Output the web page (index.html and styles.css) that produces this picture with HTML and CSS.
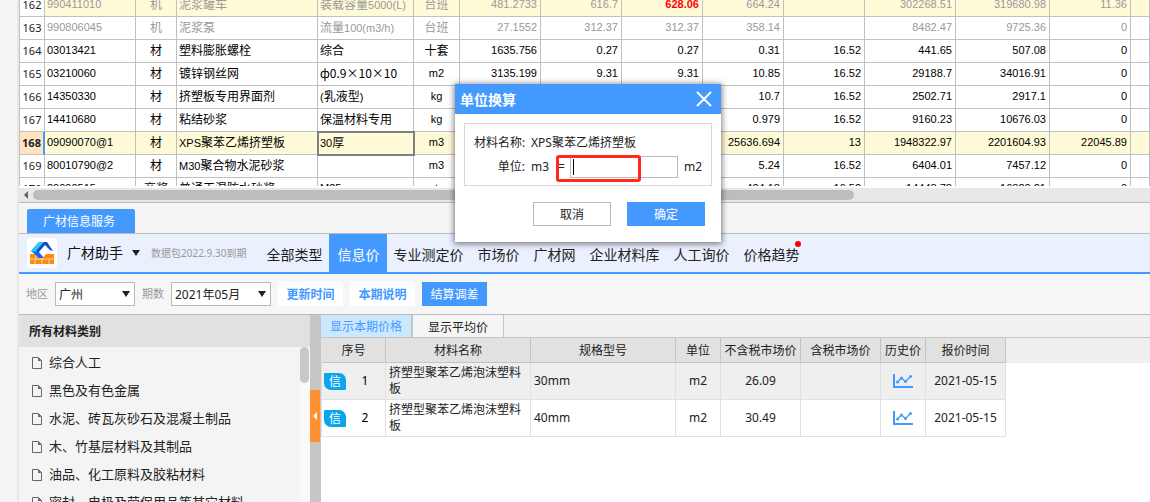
FILE: index.html
```html
<!DOCTYPE html>
<html lang="zh-CN">
<head>
<meta charset="utf-8">
<meta name="viewport" content="width=device-width, initial-scale=1">
<title>广材信息服务</title>
<link rel="stylesheet" href="styles.css">
</head>
<body>
<svg class="sprite" aria-hidden="true">
  <symbol id="i-file" viewBox="0 0 10 12"><path d="M.5.5h6l3 3v8h-9z" fill="none" stroke="#666"/><path d="M6 .5v3.5h3.5z" fill="#666"/></symbol>
  <symbol id="i-down" viewBox="0 0 8 6"><path d="M0 0h8L4 6z" fill="currentColor"/></symbol>
  <symbol id="i-chart" viewBox="0 0 20 14"><path d="M1 0v13h19" fill="none" stroke="#49f" stroke-width="2"/><path d="M4.500 8L8.500 4l4 3.500L17.500 2.500" fill="none" stroke="#49f" stroke-width="1.300"/><g fill="#49f"><circle cx="4.500" cy="8" r="1.500"/><circle cx="8.500" cy="4" r="1.500"/><circle cx="12.500" cy="7.500" r="1.500"/><circle cx="17.500" cy="2.500" r="1.500"/></g></symbol>
</svg>
<main class="app">
  <section class="sheet">
    <table class="grid">
      <colgroup><col class="w-no"><col class="w-code"><col class="w-kind"><col class="w-name"><col class="w-spec"><col class="w-unit"><col class="w-num"><col class="w-num"><col class="w-num"><col class="w-num"><col class="w-num"><col class="w-sum"><col class="w-total"><col class="w-num"><col></colgroup>
      <tbody>
      <tr class="dim warm"><th>162</th><td class="n">990411010</td><td class="c">机</td><td>泥浆罐车</td><td>装载容量<span class="n">5000(L)</span></td><td class="c">台班</td><td class="n r">481.2733</td><td class="n r">616.7</td><td class="n r alert">628.06</td><td class="n r">664.24</td><td></td><td class="n r">302268.51</td><td class="n r">319680.98</td><td class="n r">11.36</td><td></td></tr>
      <tr class="dim"><th>163</th><td class="n">990806045</td><td class="c">机</td><td>泥浆泵</td><td>流量<span class="n">100(m3/h)</span></td><td class="c">台班</td><td class="n r">27.1552</td><td class="n r">312.37</td><td class="n r">312.37</td><td class="n r">358.14</td><td></td><td class="n r">8482.47</td><td class="n r">9725.36</td><td class="n r">0</td><td></td></tr>
      <tr><th>164</th><td class="n">03013421</td><td class="c">材</td><td>塑料膨胀螺栓</td><td>综合</td><td class="c">十套</td><td class="n r">1635.756</td><td class="n r">0.27</td><td class="n r">0.27</td><td class="n r">0.31</td><td class="n r">16.52</td><td class="n r">441.65</td><td class="n r">507.08</td><td class="n r">0</td><td></td></tr>
      <tr><th>165</th><td class="n">03210060</td><td class="c">材</td><td>镀锌钢丝网</td><td>ф0.9×10×10</td><td class="c n">m2</td><td class="n r">3135.199</td><td class="n r">9.31</td><td class="n r">9.31</td><td class="n r">10.85</td><td class="n r">16.52</td><td class="n r">29188.7</td><td class="n r">34016.91</td><td class="n r">0</td><td></td></tr>
      <tr><th>166</th><td class="n">14350330</td><td class="c">材</td><td>挤塑板专用界面剂</td><td><span class="n">(</span>乳液型<span class="n">)</span></td><td class="c n">kg</td><td></td><td></td><td></td><td class="n r">10.7</td><td class="n r">16.52</td><td class="n r">2502.71</td><td class="n r">2917.1</td><td class="n r">0</td><td></td></tr>
      <tr><th>167</th><td class="n">14410680</td><td class="c">材</td><td>粘结砂浆</td><td>保温材料专用</td><td class="c n">kg</td><td></td><td></td><td></td><td class="n r">0.979</td><td class="n r">16.52</td><td class="n r">9160.23</td><td class="n r">10676.03</td><td class="n r">0</td><td></td></tr>
      <tr class="warm current"><th>168</th><td class="n">09090070@1</td><td class="c">材</td><td><span class="n">XPS</span>聚苯乙烯挤塑板</td><td class="picked"><span class="n">30</span>厚</td><td class="c n">m3</td><td></td><td></td><td></td><td class="n r">25636.694</td><td class="n r">13</td><td class="n r">1948322.97</td><td class="n r">2201604.93</td><td class="n r">22045.89</td><td></td></tr>
      <tr><th>169</th><td class="n">80010790@2</td><td class="c">材</td><td><span class="n">M30</span>聚合物水泥砂浆</td><td></td><td class="c n">m3</td><td></td><td></td><td></td><td class="n r">5.24</td><td class="n r">16.52</td><td class="n r">6404.01</td><td class="n r">7457.12</td><td class="n r">0</td><td></td></tr>
      <tr><th>170</th><td class="n">80090515</td><td class="c">商浆</td><td>普通干混防水砂浆</td><td class="n">M25</td><td class="c n">t</td><td></td><td></td><td></td><td class="n r">424.18</td><td class="n r">16.52</td><td class="n r">14448.78</td><td class="n r">16820.21</td><td class="n r">0</td><td></td></tr>
      </tbody>
    </table>
  </section>
  <div class="hscroll">
    <svg class="hscroll-arrow" viewBox="0 0 4 8"><path d="M4 0v8L0 4z" fill="#666"/></svg>
    <div class="hscroll-track"><div class="hscroll-thumb"></div></div>
  </div>
  <div class="panel-tabs"><button class="panel-tab">广材信息服务</button></div>
  <nav class="nav">
    <svg class="logo" viewBox="0 0 30 30"><rect width="30" height="30" rx="4" fill="#fff"/><path d="M3 16h24v10H3z" fill="#ff8a10"/><path d="M3 21h24M9 21v-5M8 21v5M15 21v5M22 21v5" stroke="#fff" stroke-width=".6"/><path d="M8 15h12l-5 6z" fill="#fff"/><path d="M12 4h6l-7 9 6 7h-5L4 13z" fill="#1468f0"/><path d="M12 4h5L8 14l-4-1z" fill="#2bc8fb"/><path d="M17 4h3l6 9-3-1-5-5-7 8-1-3z" fill="#0a50c8"/><path d="M18 17h6l-3 4z" fill="#ff8a10"/></svg>
    <button class="brand">广材助手 <svg class="caret"><use href="#i-down"/></svg></button>
    <span class="expiry">数据包2022.9.30到期</span>
    <a class="nav-item" href="#">全部类型</a>
    <a class="nav-item active" href="#">信息价</a>
    <a class="nav-item" href="#">专业测定价</a>
    <a class="nav-item" href="#">市场价</a>
    <a class="nav-item" href="#">广材网</a>
    <a class="nav-item" href="#">企业材料库</a>
    <a class="nav-item" href="#">人工询价</a>
    <a class="nav-item dotted" href="#">价格趋势</a>
  </nav>
  <form class="filters">
    <label for="area">地区</label>
    <span class="pick pick-area"><select id="area"><option>广州</option></select><svg class="caret"><use href="#i-down"/></svg></span>
    <label for="period">期数</label>
    <span class="pick pick-period"><select id="period"><option>2021年05月</option></select><svg class="caret"><use href="#i-down"/></svg></span>
    <button type="button" class="chip">更新时间</button>
    <button type="button" class="chip">本期说明</button>
    <button type="button" class="chip solid">结算调差</button>
  </form>
  <div class="work">
    <aside class="side">
      <h2 class="side-title">所有材料类别</h2>
      <div class="side-body">
        <ul class="tree">
          <li><svg><use href="#i-file"/></svg>综合人工</li>
          <li><svg><use href="#i-file"/></svg>黑色及有色金属</li>
          <li><svg><use href="#i-file"/></svg>水泥、砖瓦灰砂石及混凝土制品</li>
          <li><svg><use href="#i-file"/></svg>木、竹基层材料及其制品</li>
          <li><svg><use href="#i-file"/></svg>油品、化工原料及胶粘材料</li>
          <li><svg><use href="#i-file"/></svg>密封、电极及劳保用品等其它材料</li>
        </ul>
        <div class="vscroll"><div class="vscroll-thumb"></div></div>
      </div>
    </aside>
    <div class="splitter"><button class="fold" aria-label="收起"><svg viewBox="0 0 4 8"><path d="M4 0v8L0 4z" fill="#fff"/></svg></button></div>
    <section class="result">
      <div class="modes"><button class="mode on">显示本期价格</button><button class="mode">显示平均价</button></div>
      <div class="prices-wrap">
      <table class="prices">
        <colgroup><col class="p-no"><col class="p-name"><col class="p-name"><col class="p-small"><col class="p-mid"><col class="p-mid"><col class="p-small"><col class="p-mid"></colgroup>
        <thead><tr><th>序号</th><th>材料名称</th><th>规格型号</th><th>单位</th><th>不含税市场价</th><th>含税市场价</th><th>历史价</th><th>报价时间</th></tr></thead>
        <tbody>
        <tr><td><div class="seq"><span class="badge">信</span><span class="idx">1</span></div></td><td class="left">挤塑型聚苯乙烯泡沫塑料板</td><td class="left">30mm</td><td>m2</td><td>26.09</td><td></td><td><svg class="chart"><use href="#i-chart"/></svg></td><td>2021-05-15</td></tr>
        <tr><td><div class="seq"><span class="badge">信</span><span class="idx">2</span></div></td><td class="left">挤塑型聚苯乙烯泡沫塑料板</td><td class="left">40mm</td><td>m2</td><td>30.49</td><td></td><td><svg class="chart"><use href="#i-chart"/></svg></td><td>2021-05-15</td></tr>
        </tbody>
      </table>
      </div>
    </section>
  </div>
</main>
<div class="dialog" role="dialog" aria-labelledby="dlg-title">
  <header class="dialog-head"><h1 id="dlg-title">单位换算</h1><button class="close" aria-label="关闭"><svg viewBox="0 0 16 16"><path d="M1 1l14 14M15 1L1 15" stroke="#fff" stroke-width="2"/></svg></button></header>
  <div class="dialog-box">
    <span class="key">材料名称:</span><span>XPS聚苯乙烯挤塑板</span>
    <label class="key" for="ratio">单位:</label>
    <div class="convert"><span>m3</span><span class="eq">=</span><span class="field"><input id="ratio" type="text"><i class="cursor"></i><i class="mark"></i></span><span>m2</span></div>
  </div>
  <footer class="dialog-foot"><button class="btn">取消</button><button class="btn primary">确定</button></footer>
</div>
</body>
</html>
```
FILE: styles.css
```css
* { box-sizing: border-box; }
body {
  margin: 0;
  height: 100vh;
  overflow: hidden;
  background: #f4f4f4;
  color: #222;
  font: 12px/16px "Noto Sans", "Noto Sans CJK SC", sans-serif;
}
button, input, select { font: inherit; color: inherit; margin: 0; padding: 0; border: 0; border-radius: 0; background: none; }
h1, h2, ul { margin: 0; padding: 0; }
a { color: inherit; text-decoration: none; }
.sprite { display: none; }
.app {
  height: 100%;
  margin-left: 17px;
  border-left: 2px solid #e8e8e8;
  display: flex;
  flex-direction: column;
}

/* estimate sheet */
.sheet { height: 188px; overflow: hidden; background: #fff; border-bottom: 2px solid #fff; flex: none; }
.grid {
  width: 100%;
  margin-top: -6px;
  table-layout: fixed;
  border-spacing: 0;
  border-left: 1px solid #c0c0c0;
  color: #000;
}
.grid td, .grid th {
  height: 23px;
  padding: 0 2px;
  line-height: 18px;
  border-right: 1px solid #c0c0c0;
  border-bottom: 1px solid #c0c0c0;
  white-space: nowrap;
}
.grid td { padding-bottom: 2px; font-family: "Noto Sans CJK SC", sans-serif; }
.grid th { padding: 0; font: 11px/18px "Noto Sans", sans-serif; color: #222; }
.grid .n { font-family: "Liberation Sans", sans-serif; font-size: 11px; }
.grid .c { text-align: center; }
.grid .r { text-align: right; padding-right: 3px; }
.grid .dim td { color: #999; }
.grid .warm td { background: #fffbd9; }
.grid .dim .alert { color: #f00; font-weight: bold; }
.grid .current th { background: #ffe4c4; font-weight: bold; border-right: 2px solid #49f; }
.grid .picked { outline: 2px solid #808080; outline-offset: -1px; }
.w-no { width: 25px; }
.w-code { width: 91px; }
.w-kind { width: 41px; }
.w-name { width: 141px; }
.w-spec { width: 96px; }
.w-unit { width: 46px; }
.w-num { width: 81px; }
.w-sum { width: 91px; }
.w-total { width: 94px; }

.hscroll { flex: none; height: 15px; display: flex; align-items: center; gap: 5px; padding-left: 5px; background: #e8e8e8; border-bottom: 1px solid #bbb; }
.hscroll-arrow { width: 4px; height: 8px; }
.hscroll-track { flex: 1; }
.hscroll-thumb { width: 73.5%; height: 10px; border-radius: 5px; background: #bdbdbd; }

/* service panel */
.panel-tabs { flex: none; height: 31px; padding: 6px 8px 0; border-bottom: 1px solid #bbb; background: #f5f5f5; }
.panel-tab { height: 24px; width: 108px; padding: 2px 4px 0 0; background: #49f; color: #fff; border-radius: 2px 2px 0 0; display: block; }
.nav { flex: none; height: 40px; display: flex; align-items: center; padding-left: 8px; background: #ebf0ff; border-bottom: 2px solid #49f; font-size: 14px; white-space: nowrap; }
.logo { width: 30px; height: 30px; margin-right: 10px; }
.caret { width: 8px; height: 6px; color: #222; }
.brand { display: flex; align-items: center; gap: 9px; color: #111; }
.expiry { margin: 0 13px 0 11px; font-size: 10px; color: #999; }
.nav-item { position: relative; height: 38px; padding: 2px 7px 0; line-height: 38px; }
.nav-item.active { background: #49f; color: #fff; padding: 2px 8px 0; margin-right: -1px; }
.nav-item.dotted::after { content: ""; position: absolute; top: 7px; right: 5px; width: 6px; height: 6px; border-radius: 50%; background: #f00; }
.filters { flex: none; height: 41px; display: flex; align-items: center; gap: 7px; padding-left: 7px; border-bottom: 1px solid #bbb; background: #f6f6f6; white-space: nowrap; }
.filters label { font-size: 11px; color: #999; }
.pick { position: relative; height: 24px; background: #fff; border: 1px solid #bbb; }
.pick-area { width: 80px; }
.pick-period { width: 100px; }
.pick select { appearance: none; width: 100%; height: 22px; padding: 1px 0 0 3px; }
.pick .caret { position: absolute; right: 4px; top: 8px; pointer-events: none; }
.chip { width: 65px; height: 24px; padding-top: 1px; background: #fff; color: #49f; font-weight: bold; }
.chip.solid { background: #49f; color: #fff; font-weight: normal; }

.work { flex: 1; min-height: 0; display: flex; }
.side { width: 291px; flex: none; display: flex; flex-direction: column; }
.side-title { flex: none; height: 32px; padding-left: 10px; background: #e1e1e1; font-size: 12px; line-height: 34px; }
.side-body { flex: 1; min-height: 0; display: flex; }
.tree { flex: 1; padding: 1px 0 0 13px; list-style: none; font-size: 13px; overflow: hidden; white-space: nowrap; }
.tree li { height: 28px; display: flex; align-items: center; gap: 7px; }
.tree svg { width: 10px; height: 12px; margin-top: 1px; }
.vscroll { width: 10px; background: #f9f9f9; }
.vscroll-thumb { width: 9px; height: 36px; border-radius: 5px; background: #c8c8c8; }
.splitter { width: 11px; flex: none; background: #c8c6c4; padding-top: 75px; }
.fold { display: flex; align-items: center; justify-content: center; width: 10px; height: 52px; background: #ff9030; }
.fold svg { width: 4px; height: 8px; }
.result { flex: 1; min-width: 0; background: #fff; }
.modes { height: 23px; display: flex; background: #f1f1f1; border-bottom: 1px solid #c4c4c4; }
.mode { height: 22px; width: 91px; padding-top: 3px; border-right: 1px solid #c4c4c4; background: #f5f5f5; }
.mode.on { width: 92px; padding-top: 2px; background: #cce8ff; color: #49f; border-right: 2px solid #c4c4c4; }
.prices-wrap { background: linear-gradient(#efefef 25px, #fff 25px); }
.prices { table-layout: fixed; width: 685px; border-spacing: 0; border-left: 1px solid #e1e1e1; }
.prices th { height: 25px; padding: 2px 0 0; background: #e1e1e1; font-weight: normal; border-right: 1px solid #c4c4c4; border-bottom: 1px solid #c4c4c4; white-space: nowrap; }
.prices td { height: 37px; padding: 0; text-align: center; border-right: 1px solid #e1e1e1; border-bottom: 1px solid #e1e1e1; }
.prices tbody tr:nth-child(odd) { background: #efefef; }
.prices .left { text-align: left; padding: 0 3px; }
.p-no { width: 64px; }
.p-name { width: 145px; }
.p-small { width: 45px; }
.p-mid { width: 80px; }
.seq { display: flex; align-items: center; padding-left: 2px; }
.badge { width: 22px; height: 17px; line-height: 17px; background: #0aa5ee; color: #fff; border-radius: 1px 7px 1px 7px; }
.idx { width: 38px; color: #000; }
.chart { display: block; width: 20px; height: 14px; margin: 0 auto; }

/* unit conversion dialog */
.dialog { position: absolute; left: 455px; top: 84px; width: 266px; background: #fff; box-shadow: 0 1px 6px 1px rgba(0, 0, 0, .5); }
.dialog-head { height: 30px; display: flex; align-items: center; justify-content: space-between; padding: 0 9px 0 5px; background: #49f; color: #fff; }
.dialog-head h1 { padding-top: 2px; font-size: 14px; line-height: 20px; }
.close, .close svg { display: block; width: 16px; height: 16px; }
.dialog-box { margin: 9px; padding: 8px 9px 6px; border: 1px solid #d8d8d8; display: grid; grid-template-columns: 51px 1fr; column-gap: 6px; grid-template-rows: 22px 25px; align-items: center; white-space: nowrap; }
.key { text-align: right; }
.convert { display: flex; align-items: center; }
.eq { margin: 0 5px 0 9px; }
.field { position: relative; width: 108px; height: 22px; margin-right: 6px; }
.field input { display: block; width: 100%; height: 100%; padding: 0 4px; border: 1px solid #bbb; background: #fff; }
.cursor { position: absolute; left: 3px; top: 3px; width: 1px; height: 16px; background: #000; }
.mark { position: absolute; left: -14px; top: -1px; width: 85px; height: 27px; border: 3px solid #ff2a1c; border-radius: 3px; }
.dialog-foot { display: flex; justify-content: flex-end; gap: 16px; padding: 7px 16px 16px; }
.btn { width: 78px; height: 24px; padding-top: 1px; border: 1px solid #bbb; background: #fff; }
.btn.primary { border-color: #49f; background: #49f; color: #fff; }
```
